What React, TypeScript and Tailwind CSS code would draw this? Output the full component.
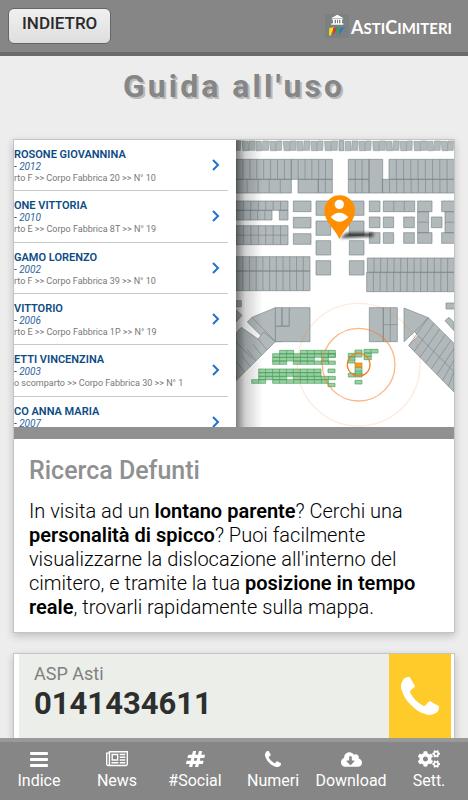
import React from 'react';
import { FaCloudDownloadAlt, FaCogs } from 'react-icons/fa';

interface Person {
  name: string;
  year: string;
  place?: string;
}

const people: Person[] = [
  { name: 'ROSONE GIOVANNINA', year: '- 2012', place: 'rto F >> Corpo Fabbrica 20 >> N° 10' },
  { name: 'ONE VITTORIA', year: '- 2010', place: 'rto E >> Corpo Fabbrica 8T >> N° 19' },
  { name: 'GAMO LORENZO', year: '- 2002', place: 'rto F >> Corpo Fabbrica 39 >> N° 10' },
  { name: 'VITTORIO', year: '- 2006', place: 'rto E >> Corpo Fabbrica 1P >> N° 19' },
  { name: 'ETTI VINCENZINA', year: '- 2003', place: 'o scomparto >> Corpo Fabbrica 30 >> N° 1' },
  { name: 'CO ANNA MARIA', year: '- 2007' },
];

// x, y, width, height, columns, rows
type Block = [number, number, number, number, number, number];

const blocks: Block[] = [
  [18, 88, 166, 60, 8, 1], [184, 88, 123, 60, 6, 1], [18, 148, 166, 41, 5, 1], [204, 148, 61, 41, 1, 1], [265, 148, 42, 41, 2, 1],
  [355, 88, 62, 60, 3, 1], [355, 148, 62, 41, 3, 1], [417, 88, 41, 101, 1, 1],
  [477, 88, 196, 60, 9, 1], [457, 148, 216, 41, 10, 1],
  [18, 213, 156, 28, 7, 1], [18, 241, 108, 29, 5, 1], [148, 241, 26, 29, 1, 1], [18, 287, 156, 57, 7, 2],
  [190, 213, 53, 32, 1, 1], [190, 262, 53, 32, 1, 1], [190, 311, 53, 32, 1, 1],
  [258, 213, 44, 43, 1, 1], [258, 273, 44, 43, 1, 1], [258, 332, 44, 43, 1, 1], [258, 392, 44, 43, 1, 1],
  [358, 213, 44, 43, 1, 1], [358, 273, 44, 43, 1, 1], [358, 332, 44, 43, 1, 1], [358, 392, 44, 43, 1, 1],
  [418, 213, 32, 32, 1, 1], [418, 261, 32, 32, 1, 1], [418, 308, 32, 32, 1, 1],
  [460, 213, 94, 32, 3, 1], [460, 261, 31, 32, 1, 1], [460, 308, 31, 32, 1, 1],
  [521, 261, 32, 32, 1, 1], [521, 308, 32, 32, 1, 1],
  [563, 213, 43, 32, 1, 1], [563, 245, 33, 63, 1, 2], [563, 308, 43, 32, 1, 1],
  [604, 261, 32, 32, 1, 1], [635, 213, 40, 32, 1, 1], [645, 245, 30, 63, 1, 2], [635, 308, 40, 32, 1, 1],
  [18, 380, 222, 43, 11, 1], [18, 423, 222, 59, 11, 1],
  [412, 384, 261, 43, 13, 1], [410, 427, 263, 58, 13, 1],
  [136, 533, 20, 102, 1, 1], [156, 533, 22, 56, 1, 1], [136, 589, 42, 0, 1, 1],
  [418, 533, 42, 102, 1, 1], [460, 533, 42, 102, 2, 2],
  [0, 512, 34, 18, 1, 1], [648, 519, 30, 18, 1, 1],
];

const greenBlocks: Block[] = [
  [149, 661, 42, 11, 2, 1], [211, 661, 105, 11, 5, 1], [128, 671, 188, 11, 9, 1],
  [128, 682, 125, 11, 6, 1], [275, 682, 20, 11, 1, 1], [295, 671, 21, 11, 1, 1],
  [128, 693, 42, 10, 2, 1], [190, 693, 105, 10, 5, 1], [296, 693, 20, 10, 1, 1],
  [86, 717, 187, 11, 9, 1], [86, 728, 187, 11, 9, 1], [294, 717, 21, 11, 1, 1],
  [86, 739, 84, 10, 4, 1], [190, 739, 126, 10, 6, 1],
  [65, 749, 42, 11, 2, 1], [128, 749, 167, 11, 8, 1], [294, 760, 21, 10, 1, 1],
  [375, 660, 21, 10, 1, 1], [402, 658, 42, 11, 2, 1], [355, 670, 41, 11, 2, 1], [402, 669, 22, 20, 1, 2],
  [355, 681, 20, 18, 1, 2], [375, 712, 21, 23, 1, 2], [355, 730, 41, 11, 2, 1], [375, 751, 21, 11, 1, 1],
];

const outline = (list: Block[]) =>
  list
    .map(([x, y, w, h, cols, rows]) => {
      let d = `M${x} ${y}h${w}v${h}h${-w}z`;
      for (let i = 1; i < cols; i++) d += `M${x + (w * i) / cols} ${y}v${h}`;
      for (let i = 1; i < rows; i++) d += `M${x} ${y + (h * i) / rows}h${w}`;
      return d;
    })
    .join('');

const topRow = Array.from({ length: 32 }, (_, i) => 16 + i * 20.6).filter((x) => x < 305 || x > 345);

function CemeteryMap() {
  return (
    <svg viewBox="18 30 654 861" preserveAspectRatio="xMinYMin slice" className="block h-full w-full" aria-hidden="true">
      <defs>
        <linearGradient id="edge" x1="0" x2="1" y1="0" y2="0">
          <stop offset="0" stopColor="#000" stopOpacity="0.5" />
          <stop offset="0.35" stopColor="#000" stopOpacity="0.18" />
          <stop offset="1" stopColor="#000" stopOpacity="0" />
        </linearGradient>
        <filter id="soft" x="-20%" y="-100%" width="140%" height="300%">
          <feGaussianBlur stdDeviation="4" />
        </filter>
      </defs>
      <rect x="18" y="30" width="654" height="861" fill="#fff" />
      <g fill="#b1b9bb" stroke="#7b878c" strokeWidth="2">
        {topRow.map((x, i) => (
          <path key={i} d={`M${x} ${33 + (i % 2)}h${i % 3 ? 18 : 16}l${i % 2 ? 2 : -1} 28h-18z`} stroke="#939d9f" />
        ))}
        <path d="M327 32h14v30h-14z" />
        <path d={outline(blocks)} />
        <path d="M178 533h62v102H136V589h42z" />
        <path d="M136 533L66 562L52 576L101 625L136 635z" />
        <path d="M136 635L101 606L84 627L34 592L18 609V752z" />
        <path d="M18 540L36 556L18 576z" />
        <path d="M522 534L595 563L672 640V786L536 647L564 617L554 605L522 635z" />
        <path d="M645 572L657 562L672 577V602z" />
      </g>
      <path
        d="M66 562L136 635M84 627L111 660M68 642L95 676M51 659L78 693M34 676L61 710M18 694L44 727M18 636L67 686M595 563L536 647M564 617L672 725M595 563L554 605M612 580L553 664M629 597L570 682M646 614L587 699M663 631L604 716M672 656L621 734M672 690L638 751M672 724L655 769"
        fill="none"
        stroke="#7b878c"
        strokeWidth="2"
      />
      <path d={outline(greenBlocks)} fill="#9bcfa4" stroke="#49a05c" strokeWidth="2" />
      <rect x="375" y="699" width="21" height="12" fill="#f5a11c" stroke="#d97b10" strokeWidth="2" />
      <g fill="none" stroke="#f57c1f">
        <circle cx="386" cy="704" r="34" strokeWidth="4" />
        <circle cx="386" cy="704" r="109" strokeWidth="4" strokeOpacity="0.55" />
        <circle cx="386" cy="704" r="184" strokeWidth="4" strokeOpacity="0.15" />
      </g>
      <path d="M330 325L350 308H430V320z" fill="#000" fillOpacity="0.7" filter="url(#soft)" />
      <path d="M328 327C318 299 283 277 283 242a46 46 0 0 1 92 0C375 277 340 299 328 327z" fill="#ff8f00" />
      <circle cx="328" cy="223" r="14" fill="#fff" />
      <path d="M302 261Q328 235 355 261Q328 290 302 261z" fill="#fff" />
      <rect x="18" y="30" width="80" height="861" fill="url(#edge)" />
    </svg>
  );
}

function PhoneIcon({ className }: { className: string }) {
  return (
    <svg viewBox="0 128 1408 1408" fill="currentColor" className={className} aria-hidden="true">
      <path d="M1408 1240q0 27-10 70.5t-21 68.5q-21 50-122 106-94 51-186 51-27 0-53-3.5t-57.5-12.5-47-14.5-55.5-20.5-49-18q-98-35-175-83-127-79-264-216t-216-264q-48-77-83-175-3-9-18-49t-20.5-55.5-14.5-47-12.5-57.5-3.5-53q0-92 51-186 56-101 106-122 25-11 68.5-21t70.5-10q14 0 21 3 18 6 53 76 11 19 30 54t35 63.5 31 53.5q3 4 17.5 25t21.5 35.5 7 28.5q0 20-28.5 50t-62 55-62 53-28.5 46q0 9 5 22.5t8.5 20.5 14 24 11.5 19q76 137 174 235t235 174q2 1 19 11.5t24 14 20.5 8.5 22.5 5q18 0 46-28.5t53-62 55-62 50-28.5q14 0 28.5 7t35.5 21.5 25 17.5q25 15 53.5 31t63.5 35 54 30q70 35 76 53 3 7 3 21z" />
    </svg>
  );
}

function NewsIcon() {
  return (
    <svg viewBox="0 128 2048 1408" fill="currentColor" className="w-[22px]" aria-hidden="true">
      <path d="M1024 512H640v384h384V512zm128 640v128H512v-128h640zm0-768v640H512V384h640zm640 768v128h-512v-128h512zm0-256v128h-512V896h512zm0-256v128h-512V640h512zm0-256v128h-512V384h512zM256 1344V384H128v960q0 26 19 45t45 19 45-19 19-45zm1664 0V256H384v1088q0 33-11 64h1483q26 0 45-19t19-45zM2048 128v1216q0 80-56 136t-136 56H192q-80 0-136-56T0 1344V256h256V128h1792z" />
    </svg>
  );
}

function HashIcon() {
  return (
    <svg viewBox="0 0 1728 1536" fill="currentColor" className="w-[19px]" aria-hidden="true">
      <path d="M959 896l64-256H769l-64 256h254zm768-504l-56 224q-7 24-31 24h-327l-64 256h311q15 0 25 12 10 14 6 28l-56 224q-5 24-31 24h-327l-81 328q-7 24-31 24H841q-16 0-26-12-9-12-6-28l78-312H633l-81 328q-7 24-31 24H296q-15 0-25-12-9-12-6-28l78-312H32q-15 0-25-12-9-12-6-28l56-224q7-24 31-24h327l64-256H168q-15 0-25-12-10-14-6-28l56-224q5-24 31-24h327l81-328q7-24 32-24h224q15 0 25 12 9 12 6 28l-78 312h254l81-328q7-24 32-24h224q15 0 25 12 9 12 6 28l-78 312h311q15 0 25 12 9 12 6 28z" />
    </svg>
  );
}

function BarsIcon() {
  return (
    <svg viewBox="0 0 18 15" fill="currentColor" className="w-[18px]" aria-hidden="true">
      <rect width="18" height="3" rx="1" />
      <rect y="6" width="18" height="3" rx="1" />
      <rect y="12" width="18" height="3" rx="1" />
    </svg>
  );
}

function Logo() {
  return (
    <a href="#home" className="flex items-center gap-0.5 font-[Lato,sans-serif] font-bold text-white uppercase">
      <svg viewBox="0 0 72 72" className="size-6 bg-[#7b8081]" aria-hidden="true">
        <path d="M37 2L56 13H18zM21 14h32v3H21zM24 17h5v12h-5zM33 17h3v12h-3zM39 17h3v12h-3zM46 17h5v12h-5zM20 28h35v4H18z" fill="#fff" />
        <path d="M13 42L27 40L16 66L12 64z" fill="#f8e018" />
        <path d="M24 43L37 40L25 65z" fill="#e3342b" />
        <path d="M34 43L47 40L33 64z" fill="#2fa84a" />
        <path d="M44 42L60 39L41 64z" fill="#2a78d0" />
      </svg>
      <span className="pt-0.5 text-lg leading-6">
        A<span className="text-[15px]">sti</span>C<span className="text-[15px]">imiteri</span>
      </span>
    </a>
  );
}

const tabs = [
  { label: 'Indice', icon: <BarsIcon /> },
  { label: 'News', icon: <NewsIcon /> },
  { label: '#Social', icon: <HashIcon /> },
  { label: 'Numeri', icon: <PhoneIcon className="size-4" /> },
  { label: 'Download', icon: <FaCloudDownloadAlt className="size-[21px]" /> },
  { label: 'Sett.', icon: <FaCogs className="size-[22px]" /> },
];

export default function App() {
  return (
    <div className="flex h-screen flex-col bg-[#ededed] font-[Roboto,sans-serif]">
      <header className="flex h-14 shrink-0 items-center justify-between border-b-4 border-[#6b6b6b] bg-[#868686] pr-4 pl-2">
        <button className="h-9 rounded-md border border-[#666] bg-linear-to-b from-[#f0f0f0] to-[#dedede] px-[13px] pb-1 text-[17px] font-medium text-[#2a2a2a]">
          INDIETRO
        </button>
        <Logo />
      </header>

      <main className="flex-1 overflow-y-auto px-[13px] [scrollbar-width:none]">
        <h1 className="pt-1.5 pb-7 text-center text-[32px] leading-[49px] font-bold tracking-[3px] text-[#868686] [text-shadow:2px_2px_0_#bbb]">
          Guida all'uso
        </h1>

        <section className="border border-[#c4c4c4] bg-white shadow-[0_3px_8px_rgba(0,0,0,0.2)]">
          <div className="flex h-[287px] overflow-hidden">
            <ul className="grid h-[308px] w-[222px] shrink-0 auto-rows-fr overflow-hidden pr-2">
              {people.map((person) => (
                <li key={person.name} className="flex items-start justify-between border-b border-[#c8c8c8] whitespace-nowrap">
                  <div className="pt-2">
                    <p className="text-[11px] leading-[13px] font-semibold text-[#0c4b85]">{person.name}</p>
                    <p className="text-[10px] leading-3 text-[#2b659c] italic">{person.year}</p>
                    {person.place && <p className="text-[9px] leading-[11px] text-[#777]">{person.place}</p>}
                  </div>
                  <svg viewBox="0 0 8 12" className="mt-[19px] mr-2 w-2" aria-hidden="true">
                    <path d="M1 1L6 6L1 11" fill="none" stroke="#2472c8" strokeWidth="2" />
                  </svg>
                </li>
              ))}
            </ul>
            <div className="min-w-0 flex-1">
              <CemeteryMap />
            </div>
          </div>
          <div className="h-3 bg-[#909090]" />
          <div className="px-[15px] pt-4 pb-[13px]">
            <h2 className="text-[25px] leading-8 font-medium text-[#909090]">Ricerca Defunti</h2>
            <p className="mt-3 text-xl leading-6 font-light text-black">
              In visita ad un <b className="font-semibold">lontano parente</b>? Cerchi una{' '}
              <b className="font-semibold">personalità di spicco</b>? Puoi facilmente visualizzarne la dislocazione all'interno
              del cimitero, e tramite la tua <b className="font-semibold">posizione in tempo reale</b>, trovarli rapidamente
              sulla mappa.
            </p>
          </div>
        </section>

        <section className="mt-5 flex border border-[#c4c4c4] bg-white px-[3px] shadow-[0_3px_8px_rgba(0,0,0,0.2)]">
          <div className="ml-0.5 flex-1 bg-[#eceee9] px-[15px] pt-2 pb-4">
            <p className="text-lg leading-6 text-[#808080]">ASP Asti</p>
            <p className="text-[31px] leading-9 font-bold text-[#2c2f2e]">0141434611</p>
          </div>
          <a href="tel:0141434611" aria-label="Chiama ASP Asti" className="flex w-[62px] items-center justify-center bg-[#ffcb2b] text-white">
            <PhoneIcon className="size-[38px]" />
          </a>
        </section>
      </main>

      <nav className="grid h-[62px] shrink-0 grid-cols-6 border-t-4 border-[#999] bg-[#868686] text-white">
        {tabs.map((tab) => (
          <a key={tab.label} href="#menu" className="flex flex-col items-center pt-1.5 text-base leading-[22px]">
            <span className="flex h-[22px] items-center">{tab.icon}</span>
            {tab.label}
          </a>
        ))}
      </nav>
    </div>
  );
}
